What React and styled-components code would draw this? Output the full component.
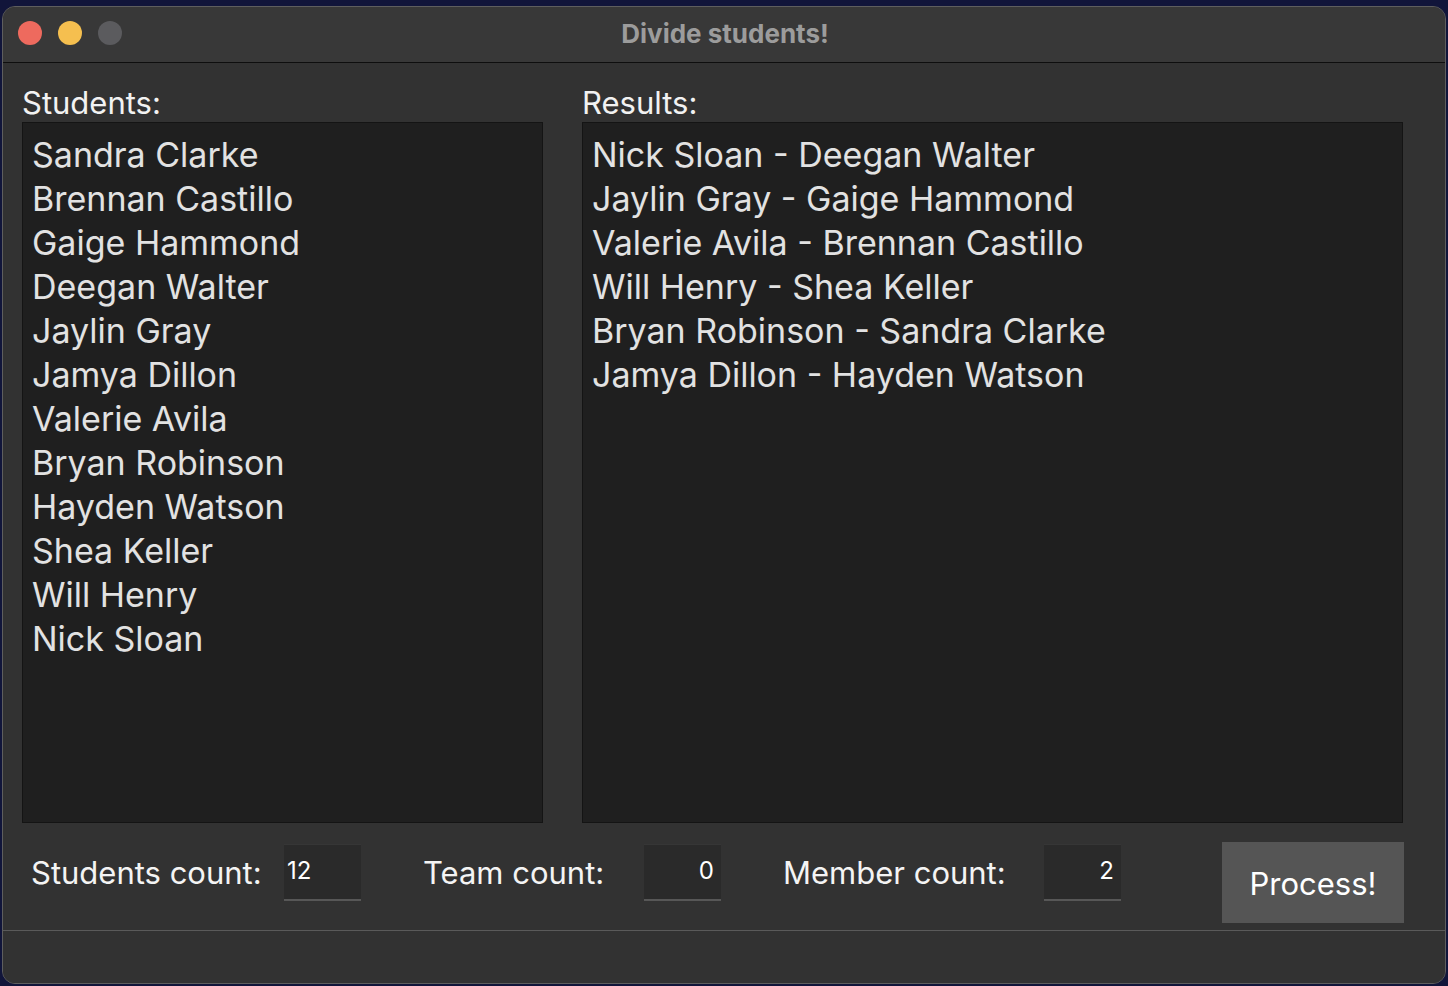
import React from "react";
import styled, { createGlobalStyle } from "styled-components";

const Global = createGlobalStyle`
  html, body { margin: 0; padding: 0; background: #11153a; }
  body { font-family: Inter, "Noto Sans", sans-serif; }
  * { box-sizing: border-box; }
`;

const Desktop = styled.div`
  width: 1448px;
  height: 986px;
  padding: 6px 2px 2px 2px;
  background: #11153a;
`;

const Window = styled.div`
  height: 978px;
  display: flex;
  flex-direction: column;
  background: #323232;
  border: 1px solid #5e5e5e;
  border-radius: 13px;
  overflow: hidden;
`;

const TitleBar = styled.div`
  position: relative;
  height: 56px;
  flex: none;
  display: flex;
  align-items: center;
  justify-content: center;
  background: #383838;
  border-bottom: 1px solid #0e0e0e;
`;

const Lights = styled.div`
  position: absolute;
  left: 15px;
  top: 14px;
  display: flex;
  gap: 16px;
`;

const Light = styled.span`
  width: 24px;
  height: 24px;
  border-radius: 50%;
  background: ${(p) => p.$c};
`;

const Title = styled.div`
  font-weight: 700;
  font-size: 26px;
  color: #9c9c9c;
  padding: 0 0 2px 2px;
`;

const Content = styled.div`
  flex: 1;
  display: flex;
  flex-direction: column;
  padding: 0 42px 0 19px;
`;

const Columns = styled.div`
  display: flex;
  gap: 39px;
`;

const Column = styled.div`
  width: ${(p) => p.$w}px;
  flex: none;
  display: flex;
  flex-direction: column;
`;

const Label = styled.div`
  color: #f2f2f2;
  font-size: 31px;
  line-height: 36px;
  padding: 22px 0 1px 0;
`;

const ListBox = styled.div`
  height: 701px;
  background: #1f1f1f;
  border: 1px solid #141414;
  padding: 10px 9px;
`;

const Item = styled.div`
  color: #e2e2e2;
  font-size: 34px;
  line-height: 44px;
  white-space: nowrap;
`;

const Controls = styled.div`
  height: 107px;
  display: flex;
  align-items: flex-start;
  padding: 19px 0 0 9px;
`;

const Field = styled.div`
  display: flex;
  flex: none;
  align-items: center;
  margin-right: ${(p) => p.$gap}px;
  height: 61px;
`;

const FieldLabel = styled.div`
  width: ${(p) => p.$w}px;
  color: #f4f4f4;
  font-size: 31px;
`;

const NumberBox = styled.div`
  width: 77px;
  height: 57px;
  background: #2a2a2a;
  border-top: 1px solid #363636;
  border-bottom: 2px solid #575757;
  color: #ffffff;
  font-size: 24px;
  display: flex;
  align-items: center;
  justify-content: ${(p) => (p.$right ? "flex-end" : "flex-start")};
  padding: 0 7px 4px 3px;
`;

const Button = styled.div`
  width: 182px;
  height: 81px;
  flex: none;
  background: #555555;
  color: #ffffff;
  font-size: 31px;
  display: flex;
  align-items: center;
  justify-content: center;
  padding-top: 2px;
`;

const StatusBar = styled.div`
  flex: none;
  height: 54px;
  border-top: 1px solid #5a5a5a;
  background: #323232;
`;

const students = [
  "Sandra Clarke",
  "Brennan Castillo",
  "Gaige Hammond",
  "Deegan Walter",
  "Jaylin Gray",
  "Jamya Dillon",
  "Valerie Avila",
  "Bryan Robinson",
  "Hayden Watson",
  "Shea Keller",
  "Will Henry",
  "Nick Sloan",
];

const results = [
  "Nick Sloan - Deegan Walter",
  "Jaylin Gray - Gaige Hammond",
  "Valerie Avila - Brennan Castillo",
  "Will Henry - Shea Keller",
  "Bryan Robinson - Sandra Clarke",
  "Jamya Dillon - Hayden Watson",
];

export default function App() {
  return (
    <>
      <Global />
      <Desktop>
        <Window>
          <TitleBar>
            <Lights>
              <Light $c="#ee6a5e" />
              <Light $c="#f5bf4f" />
              <Light $c="#5b5b5e" />
            </Lights>
            <Title>Divide students!</Title>
          </TitleBar>
          <Content>
            <Columns>
              <Column $w={521}>
                <Label>Students:</Label>
                <ListBox>
                  {students.map((s) => (
                    <Item key={s}>{s}</Item>
                  ))}
                </ListBox>
              </Column>
              <Column $w={821}>
                <Label>Results:</Label>
                <ListBox>
                  {results.map((s) => (
                    <Item key={s}>{s}</Item>
                  ))}
                </ListBox>
              </Column>
            </Columns>
            <Controls>
              <Field $gap={62}>
                <FieldLabel $w={253}>Students count:</FieldLabel>
                <NumberBox>12</NumberBox>
              </Field>
              <Field $gap={62}>
                <FieldLabel $w={221}>Team count:</FieldLabel>
                <NumberBox $right>0</NumberBox>
              </Field>
              <Field $gap={101}>
                <FieldLabel $w={261}>Member count:</FieldLabel>
                <NumberBox $right>2</NumberBox>
              </Field>
              <Button>Process!</Button>
            </Controls>
          </Content>
          <StatusBar />
        </Window>
      </Desktop>
    </>
  );
}
